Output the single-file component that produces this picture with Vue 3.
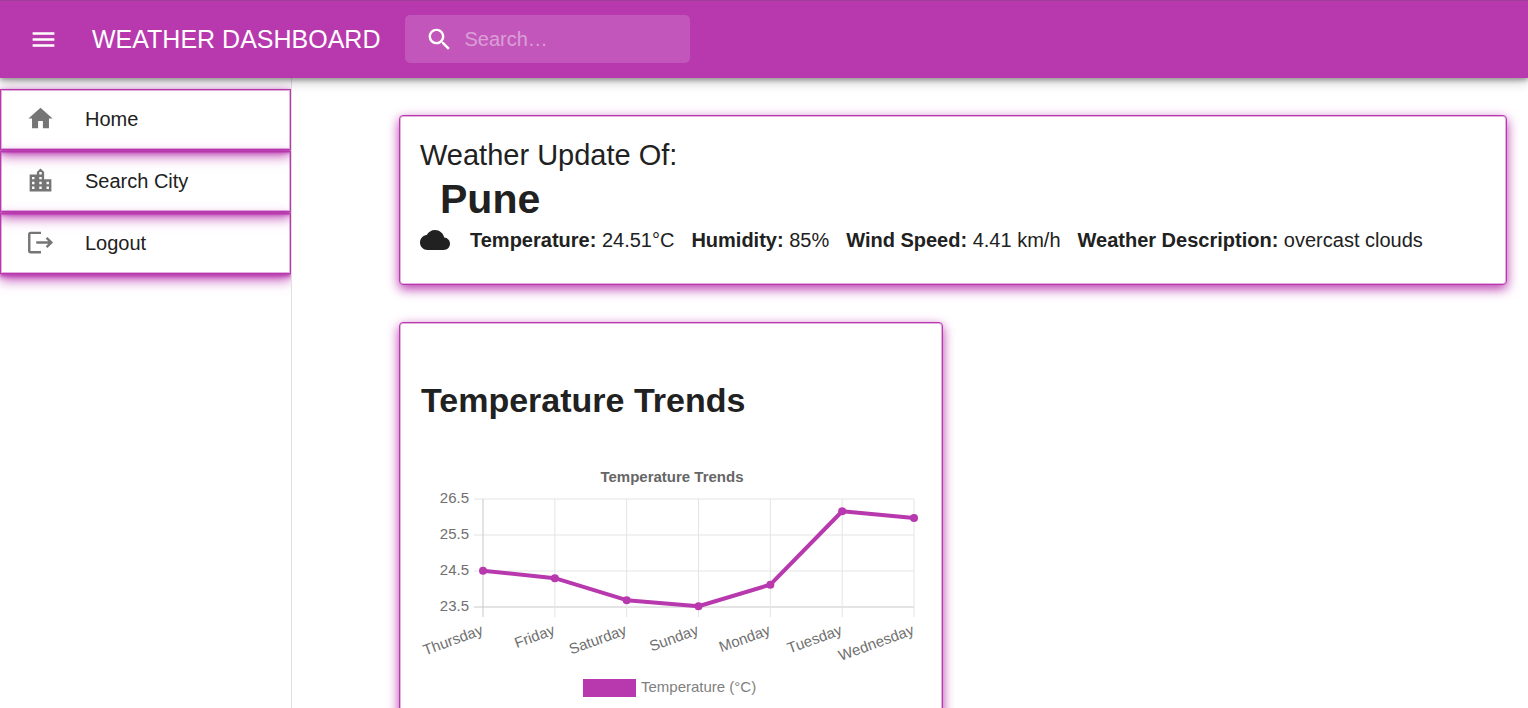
<script setup>
import { ref } from 'vue'

const query = ref('')

const navItems = [
  { label: 'Home', icon: 'M10 20v-6h4v6h5v-8h3L12 3 2 12h3v8z' },
  {
    label: 'Search City',
    icon: 'M15 11V5l-3-3-3 3v2H3v14h18V11h-6zm-8 8H5v-2h2v2zm0-4H5v-2h2v2zm0-4H5V9h2v2zm6 8h-2v-2h2v2zm0-4h-2v-2h2v2zm0-4h-2V9h2v2zm0-4h-2V5h2v2zm6 12h-2v-2h2v2zm0-4h-2v-2h2v2z',
  },
  {
    label: 'Logout',
    icon: 'M12.400 3v2H3.700v14h8.700v2H3.700c-1.100 0-2-.9-2-2V5c0-1.100.9-2 2-2zM17.700 7.400l-1.400 1.400 2.200 2.200H8.500v2h10l-2.200 2.200 1.400 1.400 4.700-4.600z',
  },
]

const stats = [
  { label: 'Temperature:', value: '24.51°C' },
  { label: 'Humidity:', value: '85%' },
  { label: 'Wind Speed:', value: '4.41 km/h' },
  { label: 'Weather Description:', value: 'overcast clouds' },
]

const days = [
  { name: 'Thursday', temp: 24.51 },
  { name: 'Friday', temp: 24.3 },
  { name: 'Saturday', temp: 23.69 },
  { name: 'Sunday', temp: 23.52 },
  { name: 'Monday', temp: 24.12 },
  { name: 'Tuesday', temp: 26.16 },
  { name: 'Wednesday', temp: 25.97 },
]
const ticks = [26.5, 25.5, 24.5, 23.5]

const left = 62
const plotWidth = 431
const step = plotWidth / (days.length - 1)
const top = 39
const degree = 36

const xAt = (i) => left + i * step
const yAt = (t) => top + (26.5 - t) * degree
const line = days.map((d, i) => `${xAt(i)},${yAt(d.temp)}`).join(' ')
</script>

<template>
  <div class="app">
    <header class="bar">
      <button class="menu" type="button" aria-label="Open menu">
        <svg viewBox="0 0 24 24"><path d="M3 18h18v-2H3v2zm0-5h18v-2H3v2zm0-7v2h18V6H3z" /></svg>
      </button>
      <div class="brand">WEATHER DASHBOARD</div>
      <label class="search">
        <svg viewBox="0 0 24 24"><path d="M15.500 14h-.79l-.28-.27C15.410 12.590 16 11.110 16 9.500 16 5.910 13.090 3 9.500 3S3 5.910 3 9.500 5.910 16 9.500 16c1.610 0 3.090-.59 4.230-1.570l.27.28v.79l5 4.990L20.490 19l-4.990-5zm-6 0C7.010 14 5 11.990 5 9.500S7.010 5 9.500 5 14 7.010 14 9.500 11.990 14 9.500 14z" /></svg>
        <input v-model="query" type="text" placeholder="Search…" aria-label="Search" />
      </label>
    </header>

    <div class="body">
      <nav class="drawer">
        <ul>
          <li v-for="item in navItems" :key="item.label">
            <a href="#">
              <svg viewBox="0 0 24 24"><path :d="item.icon" /></svg>
              <span>{{ item.label }}</span>
            </a>
          </li>
        </ul>
      </nav>

      <main class="content">
        <section class="card current">
          <h2>Weather Update Of:</h2>
          <h1>Pune</h1>
          <div class="stats">
            <svg viewBox="0 0 24 24"><path d="M19.350 10.040C18.670 6.590 15.640 4 12 4 9.110 4 6.600 5.640 5.350 8.040 2.340 8.360 0 10.910 0 14c0 3.310 2.690 6 6 6h13c2.760 0 5-2.240 5-5 0-2.640-2.050-4.780-4.650-4.960z" /></svg>
            <span v-for="s in stats" :key="s.label"><strong>{{ s.label }}</strong> {{ s.value }}</span>
          </div>
        </section>

        <section class="card trends">
          <h2>Temperature Trends</h2>
          <svg class="chart" viewBox="0 0 500 290" role="img" aria-label="Temperature Trends">
            <text class="title" x="251" y="22">Temperature Trends</text>
            <g v-for="t in ticks" :key="t">
              <line :class="['grid', { axis: t === 23.5 }]" :x1="left - 9" :x2="left + plotWidth" :y1="yAt(t)" :y2="yAt(t)" />
              <text class="tick" :x="left - 14" :y="yAt(t) + 4">{{ t }}</text>
            </g>
            <g v-for="(d, i) in days" :key="d.name">
              <line :class="['grid', { axis: i === 0 }]" :x1="xAt(i)" :x2="xAt(i)" :y1="top" :y2="top + 118" />
              <text class="tick" :transform="`translate(${xAt(i) + 1} ${top + 135}) rotate(-20)`">{{ d.name }}</text>
            </g>
            <polyline :points="line" />
            <circle v-for="(d, i) in days" :key="d.name" :cx="xAt(i)" :cy="yAt(d.temp)" r="4" />
            <rect x="162" y="219" width="53" height="18" />
            <text class="legend" x="220" y="232">Temperature (°C)</text>
          </svg>
        </section>
      </main>
    </div>
  </div>
</template>

<style>
body {
  margin: 0;
  overflow: hidden;
}
</style>

<style scoped>
.app {
  --brand: #b839ae;
  --edge: rgba(184, 57, 174, 0.4);
  height: 100vh;
  display: flex;
  flex-direction: column;
  overflow: hidden;
  background: #fff;
  color: #212121;
  font: 20px/30px "Liberation Sans", Arial, sans-serif;
}
.bar {
  position: relative;
  z-index: 2;
  flex: none;
  display: flex;
  align-items: center;
  box-sizing: border-box;
  height: 78px;
  padding: 0 29px;
  background: var(--brand);
  color: #fff;
  box-shadow: inset 0 1px #a03c9a, 0 2px 5px rgba(0, 0, 0, 0.35), 0 4px 12px rgba(0, 0, 0, 0.2);
}
.menu {
  display: flex;
  padding: 0;
  border: 0;
  background: none;
  color: inherit;
}
svg {
  flex: none;
  fill: currentColor;
}
.menu svg,
.search svg,
.drawer svg {
  width: 29px;
  height: 29px;
}
.brand {
  margin-left: 34px;
  font-size: 25px;
  white-space: nowrap;
}
.search {
  display: flex;
  align-items: center;
  box-sizing: border-box;
  width: 285px;
  height: 48px;
  margin-left: 25px;
  padding: 0 20px;
  border-radius: 5px;
  background: rgba(255, 255, 255, 0.15);
}
.search input {
  min-width: 0;
  flex: 1;
  margin-left: 10px;
  padding: 0;
  border: 0;
  outline: 0;
  background: none;
  color: inherit;
  font: inherit;
}
.search input::placeholder {
  color: #fff;
  opacity: 0.42;
}
.body {
  flex: 1;
  min-height: 0;
  display: flex;
}
.drawer {
  flex: none;
  box-sizing: border-box;
  width: 292px;
  padding-top: 11px;
  border-right: 1px solid #e0e0e0;
  overflow: hidden;
}
.drawer ul {
  margin: 0;
  padding: 0;
  list-style: none;
}
.drawer li {
  margin-bottom: 1px;
}
.drawer a {
  display: flex;
  align-items: center;
  gap: 30px;
  box-sizing: border-box;
  height: 61px;
  padding: 0 25px 2px;
  border: 1px solid var(--brand);
  box-shadow: inset 0 0 0 1px var(--edge), 0 5px 12px var(--brand), 0 2px 4px var(--brand);
  color: inherit;
  text-decoration: none;
}
.drawer svg {
  color: #757575;
}
.content {
  flex: 1;
  min-width: 0;
  display: grid;
  grid-template-columns: 1fr 1fr;
  grid-auto-rows: max-content;
  gap: 37px 20px;
  padding: 37px 21px 0 107px;
}
.card {
  box-sizing: border-box;
  padding: 20px;
  border: 1px solid var(--brand);
  border-radius: 4px;
  background: #fff;
  box-shadow: inset 0 0 0 1px var(--edge), 0 4px 12px var(--brand);
}
h1,
h2 {
  margin: 0;
}
.current {
  grid-column: 1 / -1;
  padding-top: 21px;
  padding-bottom: 29px;
}
.current h2 {
  font-size: 29px;
  line-height: 36px;
  font-weight: 400;
}
.current h1 {
  margin-left: 20px;
  font-size: 41px;
  line-height: 52px;
}
.stats {
  display: flex;
  align-items: center;
  flex-wrap: wrap;
  gap: 17px;
}
.stats svg {
  width: 30px;
  height: 30px;
  margin-right: 3px;
}
.trends {
  padding: 20px 21px;
}
.trends h2 {
  margin: 36px 0 39px;
  font-size: 34px;
  line-height: 42px;
}
.chart {
  display: block;
  width: 100%;
  font-size: 15px;
}
.chart text {
  fill: #666;
}
.chart .title {
  font-weight: 700;
  text-anchor: middle;
}
.chart .tick {
  fill: #707070;
  text-anchor: end;
}
.chart .legend {
  fill: #808080;
}
.grid {
  stroke: #e4e4e4;
}
.axis {
  stroke: #c8c8c8;
}
polyline {
  fill: none;
  stroke: var(--brand);
  stroke-width: 4;
  stroke-linejoin: round;
}
circle,
rect {
  fill: var(--brand);
}
</style>
